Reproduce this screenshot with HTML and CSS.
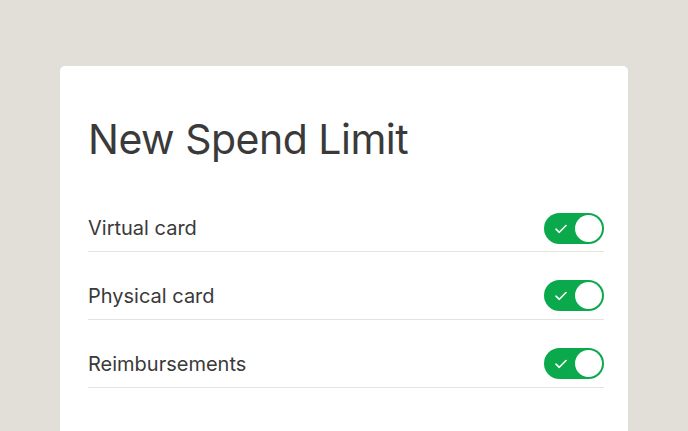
FILE: index.html
```html
<!DOCTYPE html>
<html>
<head>
<meta charset="utf-8">
<link rel="stylesheet" href="styles.css">
</head>
<body>
<div class="stage">
  <div class="card">
    <h1 class="title">New Spend Limit</h1>
    <div class="rows">
      <div class="row">
        <span class="label">Virtual card</span>
        <span class="toggle"><svg class="check" width="12" height="10" viewBox="0 0 12 10"><path d="M1 5.2 L4.3 8.3 L11 1.5" fill="none" stroke="#fff" stroke-width="1.6" stroke-linecap="round" stroke-linejoin="round"/></svg><span class="knob"></span></span>
      </div>
      <div class="row">
        <span class="label">Physical card</span>
        <span class="toggle"><svg class="check" width="12" height="10" viewBox="0 0 12 10"><path d="M1 5.2 L4.3 8.3 L11 1.5" fill="none" stroke="#fff" stroke-width="1.6" stroke-linecap="round" stroke-linejoin="round"/></svg><span class="knob"></span></span>
      </div>
      <div class="row">
        <span class="label">Reimbursements</span>
        <span class="toggle"><svg class="check" width="12" height="10" viewBox="0 0 12 10"><path d="M1 5.2 L4.3 8.3 L11 1.5" fill="none" stroke="#fff" stroke-width="1.6" stroke-linecap="round" stroke-linejoin="round"/></svg><span class="knob"></span></span>
      </div>
    </div>
  </div>
</div>
</body>
</html>
```

FILE: styles.css
```css
html, body {
  margin: 0;
  padding: 0;
  background: #e2dfd9;
  font-family: Inter, "Noto Sans", sans-serif;
  color: #3a3a3a;
  overflow: hidden;
}
.stage {
  width: 688px;
  height: 431px;
  padding: 66px 60px 0 60px;
  box-sizing: border-box;
  overflow: hidden;
}
.card {
  background: #ffffff;
  border-radius: 5px 5px 0 0;
  height: 365px;
  padding: 48px 24px 0 28px;
  box-sizing: border-box;
}
.title {
  margin: 0;
  font-size: 41px;
  font-weight: 400;
  line-height: 50px;
  letter-spacing: -0.5px;
  color: #3a3a3a;
}
.rows {
  margin-top: 21px;
}
.row {
  display: flex;
  align-items: center;
  justify-content: space-between;
  height: 67px;
  padding-top: 20px;
  box-sizing: border-box;
  border-bottom: 1.5px solid #e5e3dc;
}
.row + .row { height: 68px; }
.label {
  font-size: 20px;
  color: #3a3a3a;
}
.toggle {
  position: relative;
  width: 60px;
  height: 31px;
  border-radius: 16px;
  background: #0aa94c;
  display: block;
}
.check {
  position: absolute;
  left: 11px;
  top: 11px;
}
.knob {
  position: absolute;
  right: 2px;
  top: 2px;
  width: 27px;
  height: 27px;
  border-radius: 50%;
  background: #fff;
}
```
